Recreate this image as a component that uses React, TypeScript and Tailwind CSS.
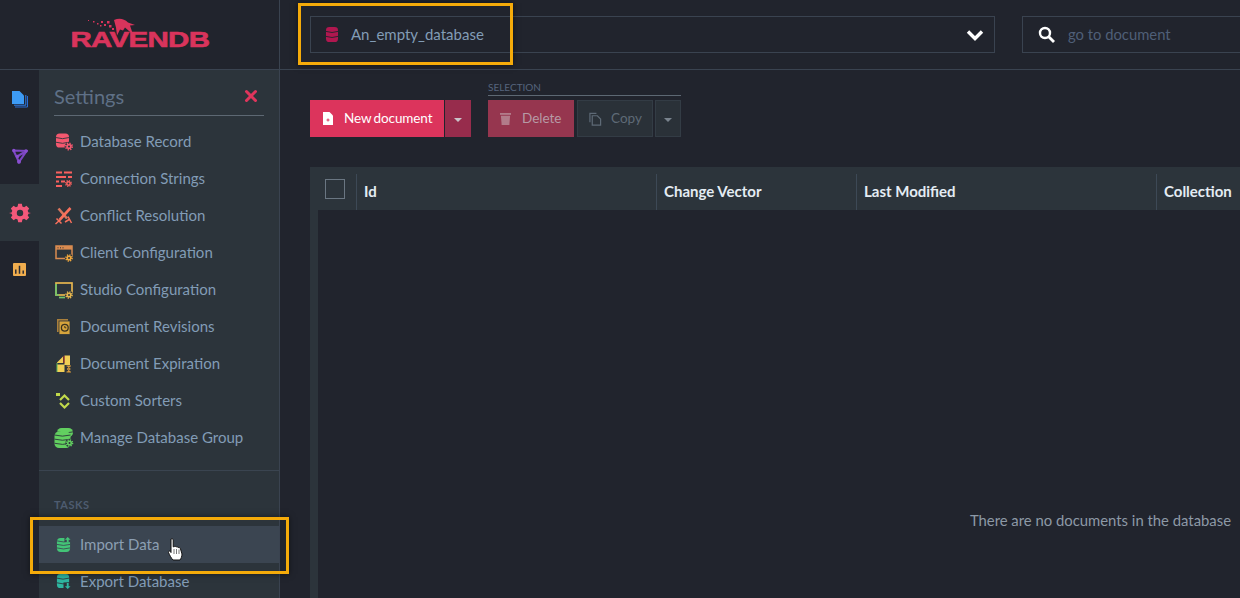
import type { ReactNode } from "react";
import { X } from "lucide-react";

function Svg({ children, className = "" }: { children: ReactNode; className?: string }) {
  return (
    <svg viewBox="0 0 18 18" className={`h-[18px] w-[18px] shrink-0 ${className}`} fill="none">
      {children}
    </svg>
  );
}

function Cog({ x, y, r, color, hole = "#2c343b" }: { x: number; y: number; r: number; color: string; hole?: string }) {
  const dash = (2 * Math.PI * r) / 16;
  return (
    <g>
      <circle cx={x} cy={y} r={r * 1.35} fill={hole} />
      <circle cx={x} cy={y} r={r * 0.85} fill={color} />
      <circle cx={x} cy={y} r={r} fill="none" stroke={color} strokeWidth={r * 0.55} strokeDasharray={`${dash} ${dash}`} />
      <circle cx={x} cy={y} r={r * 0.33} fill={hole} />
    </g>
  );
}

// database cylinder: solid body cut by curved gaps
function Cylinder({ color, x = 0, y = 0, w = 12, h = 14, gap = "#2c343b", bands = 3 }: { color: string; x?: number; y?: number; w?: number; h?: number; gap?: string; bands?: number }) {
  const step = h / bands;
  return (
    <g>
      <rect x={x} y={y} width={w} height={h} rx={w / 3.6} fill={color} />
      {Array.from({ length: bands - 1 }).map((_, i) => (
        <path key={i} d={`M${x} ${y + step * (i + 1) - 0.6}q${w / 2} 2.2 ${w} 0`} stroke={gap} strokeWidth=".9" fill="none" />
      ))}
    </g>
  );
}

const settingsItems: { label: string; icon: ReactNode }[] = [
  {
    label: "Database Record",
    icon: (
      <Svg>
        <Cylinder color="#f4586f" x={1} y={0.5} w={13} h={14} />
        <Cog x={14} y={13.5} r={3.2} color="#f4586f" />
      </Svg>
    ),
  },
  {
    label: "Connection Strings",
    icon: (
      <Svg>
        <path d="M1 2.500h6M9 2.500h8M1 7h10M13 7h4M1 11.500h3M6 11.500h4M1 16h6" stroke="#f9605f" strokeWidth="2" />
        <Cog x={13.5} y={13.5} r={2.800} color="#f9605f" />
      </Svg>
    ),
  },
  {
    label: "Conflict Resolution",
    icon: (
      <Svg>
        <path d="M3.500 1.500l8.500 10" stroke="#d9755c" strokeWidth="2.600" />
        <path d="M15.500 1L4.500 13" stroke="#f9705c" strokeWidth="2.600" />
        <path d="M0.500 17L5 13M1.500 11.500l5 5M13 9.500l3.500 6.500M10 15l5-3" stroke="#f9705c" strokeWidth="1.500" />
      </Svg>
    ),
  },
  {
    label: "Client Configuration",
    icon: (
      <Svg>
        <rect x="1" y="2" width="16" height="12.500" stroke="#d98b50" strokeWidth="1.500" />
        <rect x="1" y="2" width="16" height="3.600" fill="#d98b50" />
        <path d="M2.500 3.800h1M5 3.800h1M7.500 3.800h1" stroke="#2c343b" strokeWidth="1" />
        <Cog x={14} y={14} r={3} color="#f2a83c" />
      </Svg>
    ),
  },
  {
    label: "Studio Configuration",
    icon: (
      <Svg>
        <rect x="1" y="2" width="16" height="12" stroke="#e5b64f" strokeWidth="1.700" />
        <path d="M1 3v11h3" stroke="#6fc46b" strokeWidth="1.700" />
        <path d="M4 16.500h6" stroke="#6fc46b" strokeWidth="1.700" />
        <Cog x={14} y={14} r={3} color="#e5b64f" />
      </Svg>
    ),
  },
  {
    label: "Document Revisions",
    icon: (
      <Svg>
        <rect x="2" y="1" width="11" height="13" fill="#a97f3c" />
        <rect x="4" y="3" width="11" height="13.500" fill="#d6a43c" stroke="#2c343b" strokeWidth=".8" />
        <circle cx="9.800" cy="9.700" r="3.400" stroke="#3a3320" strokeWidth="1.300" />
        <path d="M9.800 8v1.800h1.500" stroke="#3a3320" strokeWidth="1" />
      </Svg>
    ),
  },
  {
    label: "Document Expiration",
    icon: (
      <Svg>
        <path d="M2 7.500L8 1.500v6.500H2zM9.500 0.500H15V10H9.500zM2 9.500h7.500V17H2z" fill="#f1cf56" />
        <path d="M2 8v9" stroke="#5cb85c" strokeWidth="1" />
        <path d="M9 1v7" stroke="#c0392b" strokeWidth="1" />
        <rect x="10" y="10" width="7" height="7.500" fill="#2c343b" />
        <path d="M11.500 11h4.500M11.500 17h4.500M12.500 11l2.500 3-2.500 3M15 11l-2.500 3 2.500 3" stroke="#d89a3c" strokeWidth="1.100" />
      </Svg>
    ),
  },
  {
    label: "Custom Sorters",
    icon: (
      <Svg>
        <path d="M5 8L9.500 3.500 14 8M5 11l4.500 4.500L14 11" stroke="#c1d94b" strokeWidth="2.200" />
        <path d="M1 2.500h4" stroke="#c1d94b" strokeWidth="3" />
      </Svg>
    ),
  },
  {
    label: "Manage Database Group",
    icon: (
      <svg viewBox="0 0 20 20" className="h-[20px] w-[20px] shrink-0" fill="none">
        <Cylinder color="#62cf60" x={3} y={0} w={16} h={9} bands={2} />
        <Cylinder color="#62cf60" x={0.5} y={3.500} w={16} h={16.500} bands={4} />
        <Cog x={15.500} y={15} r={3} color="#62cf60" />
      </svg>
    ),
  },
];

function MenuRow({ label, icon, active }: { label: string; icon: ReactNode; active?: boolean }) {
  return (
    <div className={`flex h-[37px] items-center gap-[7px] pl-[15px] text-[15px] ${active ? "bg-[#3b4551] text-[#8c9fb3]" : "text-[#829cb6]"}`}>
      <span className="flex w-[19px] justify-center">{icon}</span>
      <span>{label}</span>
    </div>
  );
}

function Rail() {
  return (
    <div className="flex w-[39px] shrink-0 flex-col">
      <div className="flex h-[57px] items-center justify-center">
        <svg viewBox="0 0 16 18" className="h-[18px] w-[16px]" fill="none">
          <path d="M3 17h12.500V6" stroke="#2a6fd6" strokeWidth="1" />
          <path d="M2 15.200h11.800V5" stroke="#2f80ed" strokeWidth="1" />
          <path d="M0 1h7.500L12 5.500V14H0z" fill="#3d9bf5" />
        </svg>
      </div>
      <div className="flex h-[57px] items-center justify-center">
        <svg viewBox="0 0 16 16" className="h-[16px] w-[16px]" fill="none">
          <path d="M1.500 2.500L14.500 3 7 14 1.500 2.500M5 8.500L14.500 3" stroke="#7d47c2" strokeWidth="2.100" />
          <circle cx="7" cy="13.800" r="2" fill="#8a4fd0" />
          <circle cx="14" cy="3" r="1.800" fill="#8a4fd0" />
          <circle cx="1.800" cy="2.500" r="1.700" fill="#8a4fd0" />
          <circle cx="5.500" cy="8.500" r="1.700" fill="#8a4fd0" />
        </svg>
      </div>
      <div className="flex h-[57px] items-center justify-center bg-[#2c343b]">
        <svg viewBox="-1 0 24 22" className="h-[22px] w-[22px]">
          <path
            fill="#f4587a"
            fillRule="evenodd"
            d="M9 1h4l.6 2.800 1.900.8L18 3l3 3-1.600 2.500.8 1.900L23 11v0l-2.800.8-.8 1.900L21 16l-3 3-2.500-1.600-1.900.8L13 21H9l-.6-2.800-1.900-.8L4 19l-3-3 1.600-2.300-.8-1.900L-1 11l2.800-.6.8-1.900L1 6l3-3 2.500 1.600 1.900-.8zM11 7.500a3.500 3.500 0 100 7 3.500 3.500 0 000-7z"
          />
        </svg>
      </div>
      <div className="flex h-[57px] items-center justify-center">
        <svg viewBox="0 0 14 14" className="h-[13px] w-[13px]">
          <rect width="14" height="14" rx="1" fill="#f0ad4e" />
          <path d="M3 7v4.500M7 3v8.500M11 8v3.500" stroke="#2a2c33" strokeWidth="1.600" />
        </svg>
      </div>
    </div>
  );
}

function SettingsPanel() {
  return (
    <div className="h-full w-[240px] overflow-hidden bg-[#2c343b]">
      <div className="mx-[15px] mt-[12px] flex h-[34px] items-center justify-between border-b border-[#5d6873] pb-[6px]">
        <span className="text-[20px] text-[#5f7086]">Settings</span>
        <X size={18} strokeWidth={4} className="mr-[4px] text-[#e0355c]" />
      </div>
      <div className="mt-[7px] border-b border-[#3a4450] pb-[14px]">
        {settingsItems.map((item) => (
          <MenuRow key={item.label} label={item.label} icon={item.icon} />
        ))}
      </div>
      <div className="pb-[14px] pl-[15px] pt-[27px] text-[11px] font-bold leading-[14px] tracking-[0.5px] text-[#4e5c70]">TASKS</div>
      <MenuRow
        active
        label="Import Data"
        icon={
          <svg viewBox="0 0 16 16" className="h-[15px] w-[15px]" fill="none">
            <Cylinder color="#43c477" x={1} y={1} w={14} h={15} gap="#3b4551" bands={4} />
            <rect x="9" y="0" width="7" height="5.500" fill="#3b4551" />
            <path d="M12.500 0l3 3h-2v2.500h-2V3h-2z" fill="#43c477" />
          </svg>
        }
      />
      <MenuRow
        label="Export Database"
        icon={
          <svg viewBox="0 0 16 16" className="h-[15px] w-[15px]" fill="none">
            <Cylinder color="#2eb6a0" x={1} y={0} w={13} h={15} />
            <rect x="8" y="9" width="8" height="7" fill="#2c343b" />
            <path d="M12.500 16l3-3h-2V9.500h-2V13h-2z" fill="#2eb6a0" />
          </svg>
        }
      />
    </div>
  );
}

function Logo() {
  return (
    <div className="relative flex h-[69px] w-[280px] shrink-0 flex-col items-center justify-end border-r border-[#3a4350] pb-[20px]">
      <svg viewBox="0 0 56 20" className="absolute left-[86px] top-[18px] h-[20px] w-[56px]">
        <g fill="#d9345c">
          <path d="M28 2c5-2 10-1.500 14 2.500l7 2.500-5 .5 3 9-8-7-2 3-3-1-3 6-1-8z" />
          <rect x="2" y="2" width="1" height="1" />
          <rect x="7" y="3" width="1.500" height="1.500" />
          <rect x="11" y="5" width="1.500" height="1.500" />
          <rect x="15" y="3" width="2" height="2" />
          <rect x="18" y="6" width="2" height="2" />
          <rect x="21" y="3" width="2.500" height="2.500" />
          <rect x="23" y="7" width="2.500" height="2.500" />
          <rect x="14" y="7" width="1.500" height="1.500" />
          <rect x="26" y="10" width="2" height="2" />
        </g>
      </svg>
      <span className="inline-block origin-center scale-x-[1.34] font-['Liberation_Sans',sans-serif] text-[22px] font-bold leading-[18px] tracking-[-0.5px] text-[#d9345c] [-webkit-text-stroke:0.6px_#d9345c]">
        RAVENDB
      </span>
    </div>
  );
}

function Header() {
  return (
    <div className="flex h-[70px] shrink-0 border-b border-[#3a4350]">
      <Logo />
      <div className="flex min-w-0 flex-1 items-start pl-[30px] pt-[16px]">
        <div className="flex h-[37px] w-[685px] items-center border border-[#3a4350] pl-[15px] pr-[10px]">
          <svg viewBox="0 0 12 15" className="h-[15px] w-[12px]" fill="none">
            <Cylinder color="#b0174f" w={12} h={15} gap="#21242d" />
          </svg>
          <span className="ml-[13px] flex-1 text-[15px] text-[#829cb6]">An_empty_database</span>
          <svg viewBox="0 0 18 12" className="h-[12px] w-[18px]" fill="none">
            <path d="M2 2.500l7 7 7-7" stroke="#fff" strokeWidth="3.400" />
          </svg>
        </div>
        <div className="ml-[27px] flex h-[37px] flex-1 items-center border border-r-0 border-[#3a4350] pl-[15px]">
          <svg viewBox="0 0 17 17" className="h-[17px] w-[17px]" fill="none">
            <circle cx="7" cy="7" r="5" stroke="#fff" strokeWidth="2.400" />
            <path d="M10.500 10.500l5.500 5.500" stroke="#fff" strokeWidth="2.800" />
          </svg>
          <span className="ml-[13px] text-[14.800px] text-[#4f5f78]">go to document</span>
        </div>
      </div>
    </div>
  );
}

function Toolbar() {
  return (
    <div className="flex shrink-0 items-end pl-[30px] pt-[13px]">
      <div className="flex h-[37px] items-center gap-px">
        <div className="flex h-[37px] w-[134px] items-center bg-[#dc345c] pl-[13px] text-[13.500px] tracking-[-0.1px] text-white [word-spacing:-1px]">
          <svg viewBox="0 0 10 13" className="h-[13px] w-[10px]">
            <path d="M0 0h6.500L10 3.500V13H0z" fill="#fff" />
            <path d="M3.500 8h3M5 6.500v3" stroke="#dc345c" strokeWidth="1" />
          </svg>
          <span className="ml-[11px]">New document</span>
        </div>
        <div className="flex h-[37px] w-[26px] items-center justify-center bg-[#972c4c]">
          <span className="mt-[2px] border-x-[4px] border-t-[4px] border-x-transparent border-t-[#c9c3c9]" />
        </div>
      </div>
      <div className="ml-[17px] flex flex-col">
        <div className="h-[13px] w-[193px] border-b border-[#5d6873] text-[10px] leading-[8px] text-[#56657d]">SELECTION</div>
        <div className="mt-[4px] flex h-[37px]">
          <div className="flex w-[86px] items-center bg-[#96364f] pl-[12px] text-[13.500px] text-[#b79aa5]">
            <svg viewBox="0 0 12 14" className="h-[13px] w-[11px]" fill="#b27b8a">
              <rect y="1" width="12" height="2" />
              <path d="M1 4h10l-.8 10H1.800z" />
            </svg>
            <span className="ml-[11px]">Delete</span>
          </div>
          <div className="ml-[3px] flex w-[76px] items-center border border-[#333c45] bg-[#2a3138] pl-[11px] text-[13.500px] text-[#5e6a76]">
            <svg viewBox="0 0 14 14" className="h-[14px] w-[13px]" fill="none" stroke="#5e6a76" strokeWidth="1.300">
              <path d="M8 1H1v9.500" />
              <path d="M3.500 3.500H9l3.500 3.500v6.500h-9z" />
            </svg>
            <span className="ml-[9px]">Copy</span>
          </div>
          <div className="ml-[2px] flex w-[26px] items-center justify-center border border-[#333c45] bg-[#2a3138]">
            <span className="mt-[2px] border-x-[4px] border-t-[4px] border-x-transparent border-t-[#79838d]" />
          </div>
        </div>
      </div>
    </div>
  );
}

const columns = [
  { label: "Id", w: "w-[300px]" },
  { label: "Change Vector", w: "w-[200px]" },
  { label: "Last Modified", w: "w-[300px]" },
  { label: "Collection", w: "flex-1" },
];

function DocumentsTable() {
  return (
    <div className="ml-[30px] mt-[30px] flex min-h-0 flex-1 flex-col bg-[#2c343b] pl-[8px]">
      <div className="flex h-[43px] shrink-0 pt-[7px]">
        <div className="flex w-[38px] items-center pb-[7px]">
          <span className="ml-[7px] h-[20px] w-[20px] border border-[#6a7682]" />
        </div>
        {columns.map((c) => (
          <div key={c.label} className={`${c.w} border-l border-[#3d4956] pb-[1px] pl-[7px] pt-[7px] text-[15px] font-bold leading-[21px] text-[#e4ecf3]`}>
            {c.label}
          </div>
        ))}
      </div>
      <div className="flex flex-1 justify-end bg-[#21242d] pr-[9px] pt-[300px] text-[14.850px] leading-[20px] text-[#8d99a6]">
        There are no documents in the database
      </div>
    </div>
  );
}

function HandCursor() {
  return (
    <svg viewBox="0 0 15 23" className="absolute left-[168px] top-[538px] h-[23px] w-[15px]">
      <path
        d="M3 1c1-.8 2.200 0 2.200 1v6.800l1-.1c.6-.6 1.800-.4 2 .3.700-.4 1.800-.2 2 .6.800-.3 2.200.1 2.300 1.300L14 16c0 2.500-1 4.500-2 6H5c-1.500-1.500-3.500-5-4.500-7.500-.4-1.200 1-2 1.800-1l.7 1V2z"
        fill="#fff"
        stroke="#111"
        strokeWidth="1"
      />
      <path d="M6 11v5M8.500 11v5M11 11.500v4.500" stroke="#555" strokeWidth=".8" />
    </svg>
  );
}

export default function App() {
  return (
    <div className="relative flex h-[598px] w-[1240px] flex-col overflow-hidden bg-[#21242d] font-['Lato',sans-serif]">
      <Header />
      <div className="flex min-h-0 flex-1">
        <div className="flex w-[280px] shrink-0 border-r border-[#3a4350]">
          <Rail />
          <SettingsPanel />
        </div>
        <div className="flex min-w-0 flex-1 flex-col">
          <Toolbar />
          <DocumentsTable />
        </div>
      </div>
      <HandCursor />
      <div className="absolute left-[298px] top-[3px] h-[62px] w-[215px] border-[3px] border-[#f5ab0a] shadow-[0_0_6px_rgba(0,0,0,0.5)]" />
      <div className="absolute left-[30px] top-[517px] h-[57px] w-[259px] border-[3px] border-[#f5ab0a] shadow-[0_0_6px_rgba(0,0,0,0.5)]" />
    </div>
  );
}
